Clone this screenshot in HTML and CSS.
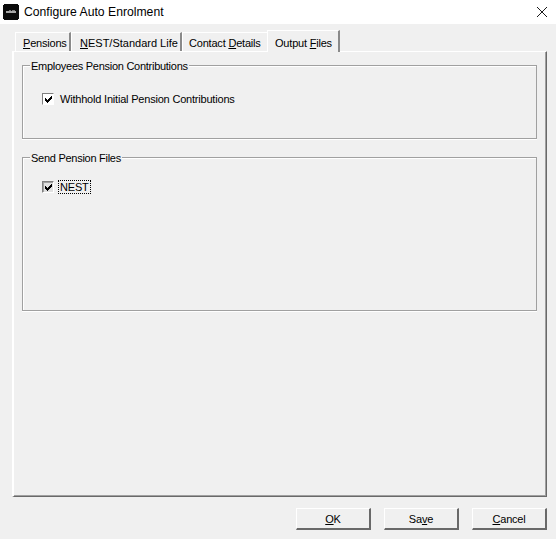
FILE: index.html
```html
<!DOCTYPE html>
<html lang="en">
<head>
    <meta charset="UTF-8">
    <meta name="viewport" content="width=device-width, initial-scale=1.0">
    <title>Configure Auto Enrolment</title>
    <link rel="stylesheet" href="styles.css">
</head>
<body>

    <div class="ventana">
        <div class="titulo">
            <svg class="logo" width="16" height="16" viewBox="0 0 16 16" shape-rendering="crispEdges">
                <rect x="0" y="0" width="16" height="16" rx="3" fill="#0b0b0b"/>
                <rect x="3" y="7" width="10" height="2" fill="#a8a8a8"/>
                <rect x="6" y="6" width="2" height="1" fill="#7a7a7a"/>
                <rect x="9" y="6" width="3" height="1" fill="#7a7a7a"/>
            </svg>
            <span class="titulotexto">Configure Auto Enrolment</span>
            <svg class="cerrar" width="10" height="10" viewBox="0 0 10 10">
                <path d="M0 0L10 10M10 0L0 10" stroke="#1a1a1a" stroke-width="1" fill="none"/>
            </svg>
        </div>

        <div class="contenido">
            <div class="pestanas">
                <div class="pestana p1"><u>P</u>ensions</div>
                <div class="pestana p2"><u>N</u>EST/Standard Life</div>
                <div class="pestana p3">Contact <u>D</u>etails</div>
                <div class="pestana p4 activa">Output <u>F</u>iles</div>
            </div>

            <div class="panel">
                <div class="grupo grupo1">
                    <div class="leyenda">Employees Pension Contributions</div>
                    <label class="opcion">
                        <span class="caja"><svg width="9" height="9" viewBox="0 0 9 9" shape-rendering="crispEdges"><path d="M1 3h1v1h1v1h1v-1h1v-1h1v-1h1v-1h1v3h-1v1h-1v1h-1v1h-1v1h-1v-1h-1v-1h-1z" fill="#000"/></svg></span>
                        <span>Withhold Initial Pension Contributions</span>
                    </label>
                </div>
                <div class="grupo grupo2">
                    <div class="leyenda">Send Pension Files</div>
                    <label class="opcion">
                        <span class="caja caja-foco"><svg width="9" height="9" viewBox="0 0 9 9" shape-rendering="crispEdges"><path d="M1 3h1v1h1v1h1v-1h1v-1h1v-1h1v-1h1v3h-1v1h-1v1h-1v1h-1v1h-1v-1h-1v-1h-1z" fill="#000"/></svg></span>
                        <span class="foco">NEST</span>
                    </label>
                </div>
            </div>

            <div class="botones">
                <button class="boton"><u>O</u>K</button>
                <button class="boton">Sa<u>v</u>e</button>
                <button class="boton"><u>C</u>ancel</button>
            </div>
        </div>
    </div>

</body>
</html>
```

FILE: styles.css
```css
html, body {
    margin: 0;
    height: 100%;
}

body {
    font-family: "Liberation Sans", Arial, sans-serif;
    font-size: 11px;
    letter-spacing: -0.2px;
    color: #000;
    background-color: #f0f0f0;
    overflow: hidden;
}

.ventana {
    display: flex;
    flex-direction: column;
    height: 539px;
}

.titulo {
    display: flex;
    align-items: center;
    height: 24px;
    padding: 0 9px 0 3px;
    background: #fff;
}

.logo {
    margin-right: 5px;
}

.titulotexto {
    flex: 1;
    font-size: 12.2px;
    letter-spacing: 0;
    color: #000;
}

.contenido {
    flex: 1;
    padding: 7px 9px 0 12px;
}

.pestanas {
    display: flex;
    height: 20px;
    padding-left: 3px;
}

.pestana {
    height: 19px;
    margin-top: 1px;
    padding: 4px 0 0 7px;
    box-sizing: border-box;
    border-top: 1px solid #fff;
    border-left: 1px solid #fff;
    border-right: 2px solid #8a8a8a;
    white-space: nowrap;
}

.p1 {
    width: 56px;
}

.p2 {
    width: 111px;
    padding-left: 8px;
    letter-spacing: 0;
}

.p3 {
    width: 85px;
    padding-left: 6px;
    border-right: 0;
}

.pestana.activa {
    width: 73px;
    height: 22px;
    margin-top: -1px;
    margin-bottom: -2px;
    padding: 6px 0 0 7px;
    background: #f0f0f0;
    position: relative;
    z-index: 1;
}

.panel {
    box-sizing: border-box;
    height: 446px;
    padding: 13px 8px 0 8px;
    border-top: 1px solid #fff;
    border-left: 2px solid #fff;
    border-right: 1px solid #696969;
    border-bottom: 1px solid #696969;
    box-shadow: inset -1px -1px 0 #a0a0a0;
}

.grupo {
    box-sizing: border-box;
    margin-right: 1px;
    border: 1px solid #a0a0a0;
    box-shadow: inset 1px 1px 0 #fff, 0 1px 0 #fff;
}

.grupo1 {
    height: 74px;
    margin-bottom: 18px;
}

.grupo2 {
    height: 154px;
}

.leyenda {
    width: max-content;
    margin: -7px 0 0 7px;
    padding: 0 1px;
    background: #f0f0f0;
    line-height: 15px;
    letter-spacing: -0.27px;
}

.opcion {
    display: flex;
    align-items: center;
    margin: 19px 0 0 19px;
}

.grupo2 .opcion {
    margin-top: 15px;
}

.caja {
    display: flex;
    align-items: center;
    justify-content: center;
    box-sizing: border-box;
    width: 12px;
    height: 12px;
    margin-right: 6px;
    background: #fff;
    border-top: 1px solid #808080;
    border-left: 1px solid #808080;
    border-right: 1px solid #fff;
    border-bottom: 1px solid #fff;
}

.caja-foco {
    background: #e0e0e0;
    box-shadow: inset 1px 1px 0 #a0a0a0;
}

.foco {
    margin-left: -1px;
    padding: 0 1px;
    outline: 1px dotted #000;
    outline-offset: 0;
}

.botones {
    display: flex;
    justify-content: flex-end;
    gap: 13px;
    padding: 11px 0 0 0;
}

.boton {
    width: 75px;
    height: 22px;
    padding: 0;
    font-family: inherit;
    font-size: 11px;
    letter-spacing: -0.2px;
    color: #000;
    background: #f0f0f0;
    border-top: 1px solid #fff;
    border-left: 1px solid #fff;
    border-right: 2px solid #696969;
    border-bottom: 2px solid #696969;
    border-radius: 0;
}
```
